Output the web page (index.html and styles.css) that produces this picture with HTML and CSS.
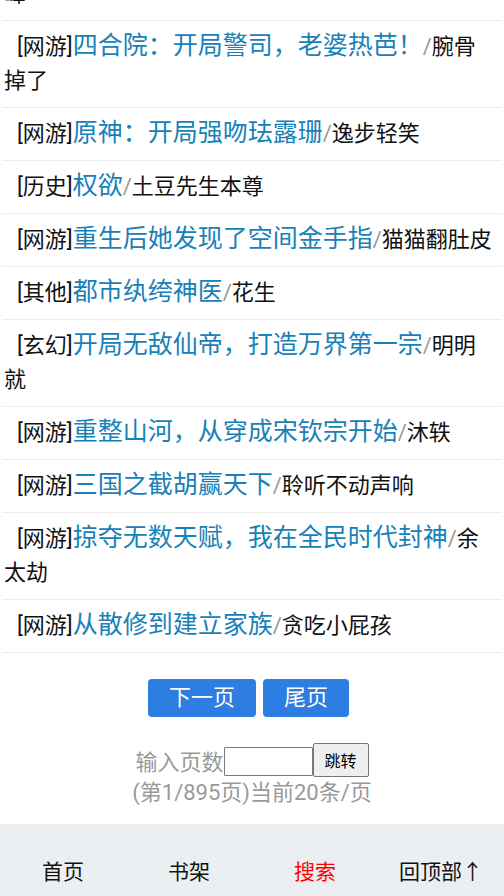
FILE: index.html
```html
<!DOCTYPE html>
<html lang="zh-CN">
<head>
<meta charset="utf-8">
<title>网游小说列表</title>
<link rel="stylesheet" href="styles.css">
</head>
<body>
<div class="page">
  <ul class="list">
    <li class="row"><span class="cat">[玄幻]</span><a class="title" href="#">开局签到荒古圣体，我直接无敌</a><span class="sep">/</span>云中峰</li>
    <li class="row"><span class="cat">[网游]</span><a class="title" href="#">四合院：开局警司，老婆热芭！</a><span class="sep">/</span>腕骨掉了</li>
    <li class="row"><span class="cat">[网游]</span><a class="title" href="#">原神：开局强吻珐露珊</a><span class="sep">/</span>逸步轻笑</li>
    <li class="row"><span class="cat">[历史]</span><a class="title" href="#">权欲</a><span class="sep">/</span>土豆先生本尊</li>
    <li class="row"><span class="cat">[网游]</span><a class="title" href="#">重生后她发现了空间金手指</a><span class="sep">/</span>猫猫翻肚皮</li>
    <li class="row"><span class="cat">[其他]</span><a class="title" href="#">都市纨绔神医</a><span class="sep">/</span>花生</li>
    <li class="row"><span class="cat">[玄幻]</span><a class="title" href="#">开局无敌仙帝，打造万界第一宗</a><span class="sep">/</span>明明就</li>
    <li class="row"><span class="cat">[网游]</span><a class="title" href="#">重整山河，从穿成宋钦宗开始</a><span class="sep">/</span>沐轶</li>
    <li class="row"><span class="cat">[网游]</span><a class="title" href="#">三国之截胡赢天下</a><span class="sep">/</span>聆听不动声响</li>
    <li class="row"><span class="cat">[网游]</span><a class="title" href="#">掠夺无数天赋，我在全民时代封神</a><span class="sep">/</span>余太劫</li>
    <li class="row"><span class="cat">[网游]</span><a class="title" href="#">从散修到建立家族</a><span class="sep">/</span>贪吃小屁孩</li>
  </ul>

  <div class="pager">
    <div class="pager-btns">
      <a class="pbtn" href="#">下一页</a>
      <a class="pbtn" href="#">尾页</a>
    </div>
    <div class="jump">
      <span>输入页数</span><input class="jump-input" type="text"><button class="jump-btn" type="button">跳转</button>
    </div>
    <div class="info">(第1/895页)当前20条/页</div>
  </div>

  <nav class="nav">
    <a class="nav-item" href="#">首页</a>
    <a class="nav-item" href="#">书架</a>
    <a class="nav-item active" href="#">搜索</a>
    <a class="nav-item" href="#">回顶部↑</a>
  </nav>
</div>
</body>
</html>
```

FILE: styles.css
```css
html, body {
  margin: 0;
  padding: 0;
  background: #fff;
}

body {
  font-family: Roboto, "Noto Sans CJK SC", sans-serif;
  color: #111;
  overflow: hidden;
}

.page {
  width: 504px;
}

.list {
  list-style: none;
  margin: -66px 0 0;
  padding: 0 2px;
}

.row {
  font-size: 22px;
  line-height: 34px;
  color: #111;
  padding: 9px 5px 9px 2px;
  text-indent: 13px;
  border-bottom: 1px solid #ececec;
}

.cat {
  color: #111;
}

.title {
  font-size: 25px;
  line-height: 1;
  color: #1781b8;
  text-decoration: none;
}

.sep {
  color: #999;
}

.pager {
  padding: 26px 0 15px;
  text-align: center;
}

.pager-btns {
  display: flex;
  justify-content: center;
  gap: 7px;
  padding-right: 7px;
}

.pbtn {
  display: block;
  height: 38px;
  line-height: 38px;
  padding: 0 21px;
  font-size: 22px;
  color: #fff;
  background: #2d7de2;
  border-radius: 4px;
  text-decoration: none;
}

.jump {
  margin-top: 26px;
  height: 34px;
  display: flex;
  justify-content: center;
  align-items: center;
  font-size: 22px;
  color: #999;
}

.jump-input {
  box-sizing: border-box;
  width: 89px;
  height: 29px;
  margin: 3px 0 0;
  padding: 0 2px;
  border: 1px solid #7a7a7a;
  border-radius: 1px;
  background: #fff;
}

.jump-btn {
  box-sizing: border-box;
  width: 56px;
  height: 34px;
  margin: 0;
  padding: 0;
  font-family: Roboto, "Noto Sans CJK SC", sans-serif;
  font-size: 16px;
  color: #000;
  background: #efefef;
  border: 1px solid #767676;
  border-radius: 2px;
}

.info {
  font-size: 22px;
  line-height: 32px;
  color: #999;
}

.nav {
  display: flex;
  height: 72px;
  background: #eceff1;
}

.nav-item {
  flex: 1;
  padding-top: 24px;
  line-height: 48px;
  font-size: 21px;
  text-align: center;
  color: #111;
  text-decoration: none;
}

.nav-item.active {
  color: #f00;
}
```
